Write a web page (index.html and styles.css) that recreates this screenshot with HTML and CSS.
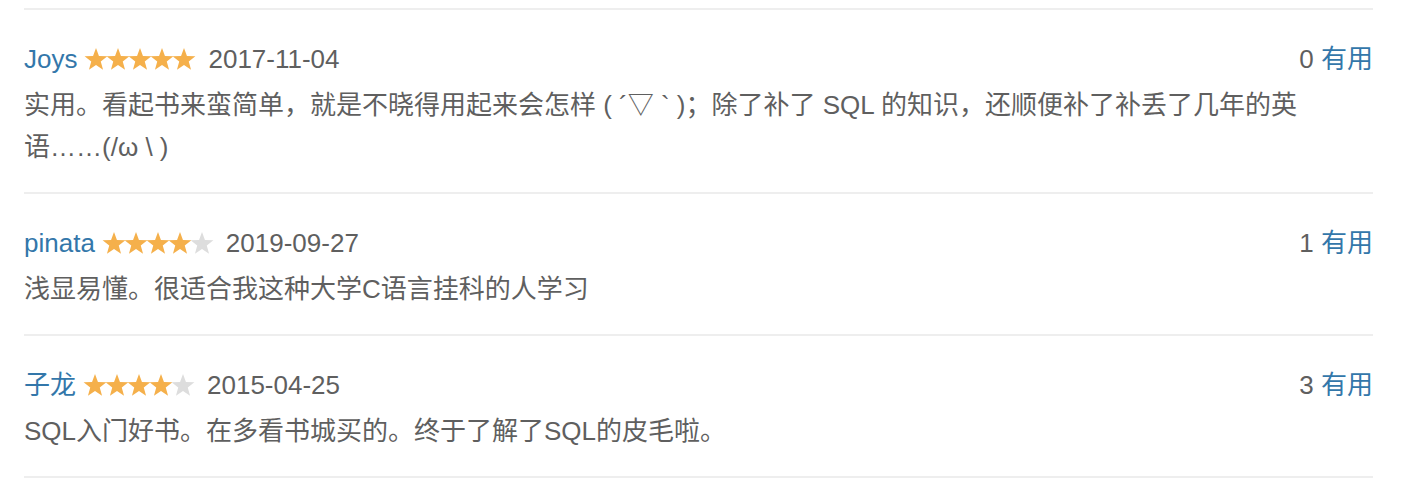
FILE: index.html
```html
<!DOCTYPE html>
<html lang="zh-CN">
<head>
<meta charset="utf-8">
<title>短评</title>
<link rel="stylesheet" href="styles.css">
</head>
<body>
<svg width="0" height="0" class="defs">
  <defs>
    <symbol id="star" viewBox="0 0 22 22" overflow="visible">
      <polygon points="11,0 13.94,7.95 22.41,8.29 15.76,13.55 18.05,21.71 11,17 3.95,21.71 6.24,13.55 -0.41,8.29 8.06,7.95"/>
    </symbol>
  </defs>
</svg>
<div class="comments">
  <div class="comment">
    <div class="head">
      <a class="user">Joys</a>
      <span class="stars">
        <svg class="star on"><use href="#star"/></svg><svg class="star on"><use href="#star"/></svg><svg class="star on"><use href="#star"/></svg><svg class="star on"><use href="#star"/></svg><svg class="star on"><use href="#star"/></svg>
      </span>
      <span class="date">2017-11-04</span>
      <span class="votes">0 <a class="useful">有用</a></span>
    </div>
    <p class="text">实用。看起书来蛮简单，就是不晓得用起来会怎样 ( ´▽ ` )；除了补了 SQL 的知识，还顺便补了补丢了几年的英语……(/ω \ )</p>
  </div>
  <div class="comment">
    <div class="head">
      <a class="user">pinata</a>
      <span class="stars">
        <svg class="star on"><use href="#star"/></svg><svg class="star on"><use href="#star"/></svg><svg class="star on"><use href="#star"/></svg><svg class="star on"><use href="#star"/></svg><svg class="star off"><use href="#star"/></svg>
      </span>
      <span class="date">2019-09-27</span>
      <span class="votes">1 <a class="useful">有用</a></span>
    </div>
    <p class="text">浅显易懂。很适合我这种大学C语言挂科的人学习</p>
  </div>
  <div class="comment">
    <div class="head">
      <a class="user">子龙</a>
      <span class="stars">
        <svg class="star on"><use href="#star"/></svg><svg class="star on"><use href="#star"/></svg><svg class="star on"><use href="#star"/></svg><svg class="star on"><use href="#star"/></svg><svg class="star off"><use href="#star"/></svg>
      </span>
      <span class="date">2015-04-25</span>
      <span class="votes">3 <a class="useful">有用</a></span>
    </div>
    <p class="text">SQL入门好书。在多看书城买的。终于了解了SQL的皮毛啦。</p>
  </div>
</div>
</body>
</html>
```

FILE: styles.css
```css
html, body {
  margin: 0;
  padding: 0;
  background: #fff;
}

.defs {
  position: absolute;
  width: 0;
  height: 0;
  overflow: hidden;
}

body {
  font-family: "Liberation Sans", "Noto Sans CJK SC", sans-serif;
  font-size: 26px;
  color: #5f5f5f;
}

.comments {
  padding: 8px 35px 0 24px;
}

.comment {
  border-top: 2px solid #eeeeee;
  padding: 28px 0 24px;
}

.comment:last-child {
  border-bottom: 2px solid #eeeeee;
}

.head {
  display: flex;
  align-items: center;
  height: 42px;
  line-height: 42px;
  white-space: nowrap;
}

.user {
  color: #3377aa;
  margin-right: 8px;
}

.stars {
  display: flex;
  align-items: center;
  margin-right: 13px;
}

.star {
  width: 22px;
  height: 22px;
  display: block;
  overflow: visible;
}

.star.on {
  fill: #f5b04b;
}

.star.off {
  fill: #dddddd;
}

.date {
  color: #5f5f5f;
}

.votes {
  margin-left: auto;
  color: #5f5f5f;
}

.useful {
  color: #3377aa;
}

.text {
  margin: 4px 0 0;
  line-height: 42px;
}
```
